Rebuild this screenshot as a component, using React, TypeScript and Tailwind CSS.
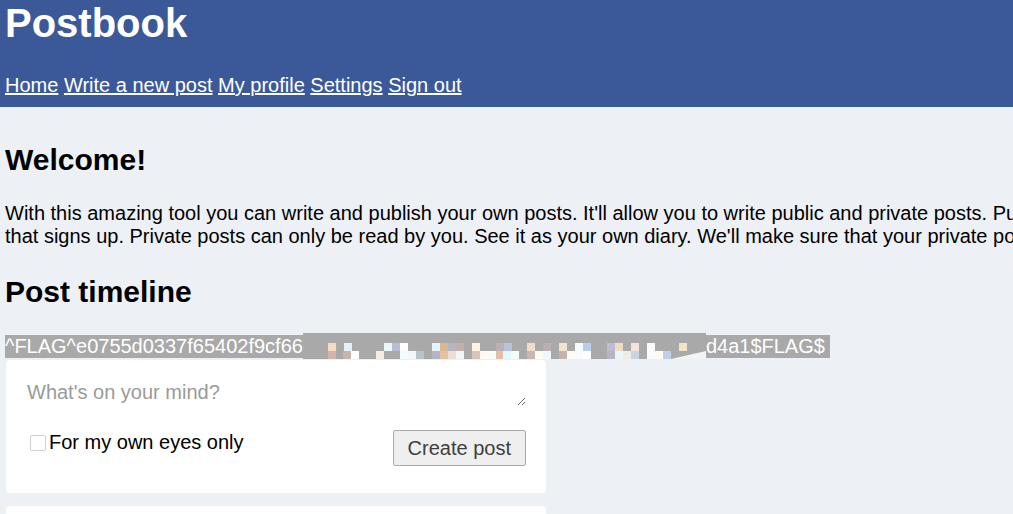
import React from "react";

type Cell = { x: number; row: number; c: string };

// redaction mosaic over the middle of the flag (x is absolute page x)
const cells: Cell[] = [
  { x: 328, row: 0, c: "#f3dcc0" },
  { x: 344, row: 0, c: "#dff3f8" },
  { x: 384, row: 0, c: "#e8f8f4" },
  { x: 392, row: 0, c: "#b9bdd3" },
  { x: 400, row: 0, c: "#ffffff" },
  { x: 432, row: 0, c: "#e3f5fa" },
  { x: 440, row: 0, c: "#dcb796" },
  { x: 448, row: 0, c: "#b2b6c6" },
  { x: 456, row: 0, c: "#c6ada8" },
  { x: 472, row: 0, c: "#fdf3df" },
  { x: 496, row: 0, c: "#bdb0b4" },
  { x: 504, row: 0, c: "#b7c3dd" },
  { x: 527, row: 0, c: "#f0dcc4" },
  { x: 543, row: 0, c: "#b8b0b4" },
  { x: 559, row: 0, c: "#f2e4cc" },
  { x: 575, row: 0, c: "#f4fcfc" },
  { x: 583, row: 0, c: "#b8ccec" },
  { x: 607, row: 0, c: "#b8bcd4" },
  { x: 615, row: 0, c: "#f0dcc0" },
  { x: 631, row: 0, c: "#f4e4e0" },
  { x: 647, row: 0, c: "#fcfcfc" },
  { x: 679, row: 0, c: "#f4e4c4" },
  { x: 328, row: 1, c: "#d4b4ac" },
  { x: 343, row: 1, c: "#c9b5a5" },
  { x: 351, row: 1, c: "#ffffff" },
  { x: 376, row: 1, c: "#f5ede0" },
  { x: 400, row: 1, c: "#eefcfe" },
  { x: 408, row: 1, c: "#f0f8fc" },
  { x: 416, row: 1, c: "#b8c4cc" },
  { x: 432, row: 1, c: "#b4b4c4" },
  { x: 440, row: 1, c: "#e2c2a2" },
  { x: 448, row: 1, c: "#ecdfcf" },
  { x: 456, row: 1, c: "#eef6f8" },
  { x: 472, row: 1, c: "#d8c4b8" },
  { x: 480, row: 1, c: "#fff8f4" },
  { x: 488, row: 1, c: "#fafafa" },
  { x: 496, row: 1, c: "#e2c0a6" },
  { x: 503, row: 1, c: "#e4f8fc" },
  { x: 511, row: 1, c: "#f4fcfc" },
  { x: 527, row: 1, c: "#c4b8b4" },
  { x: 535, row: 1, c: "#fefaf4" },
  { x: 543, row: 1, c: "#f0f8fc" },
  { x: 559, row: 1, c: "#c4b4ac" },
  { x: 567, row: 1, c: "#fcfcf4" },
  { x: 575, row: 1, c: "#f8fcfc" },
  { x: 583, row: 1, c: "#ffffff" },
  { x: 607, row: 1, c: "#b4b4c4" },
  { x: 615, row: 1, c: "#ecf4fc" },
  { x: 623, row: 1, c: "#f0ece0" },
  { x: 631, row: 1, c: "#c8d4e0" },
  { x: 647, row: 1, c: "#fcfcfc" },
  { x: 655, row: 1, c: "#fcfcf4" },
  { x: 663, row: 1, c: "#bcd0ec" },
];

function Redaction() {
  const left = 303;
  return (
    <svg width="403" height="26" viewBox="0 0 403 26" className="-mt-[2px] block shrink-0">
      <rect x="0" y="0" width="403" height="26" fill="#a9a9a9" />
      {cells.map((cell, i) => (
        <rect key={i} x={cell.x - left} y={10 + cell.row * 8} width="8" height="8" fill={cell.c} />
      ))}
      <polygon points="368,26 403,18 403,26" fill="#f4f4f4" />
    </svg>
  );
}

function Composer() {
  return (
    <div className="ml-[1px] w-[540px] rounded-[4px] bg-white px-[20px] pt-[19px] pb-[27px]">
      <textarea
        rows={1}
        placeholder="What's on your mind?"
        className="block h-[27px] w-[500px] border-0 bg-transparent px-[1px] py-[2px] text-[20px] leading-[23px] outline-none placeholder:text-[#9a9a9a]"
      />
      <div className="mt-[25px] flex items-start justify-between">
        <label className="flex items-center text-[20px] leading-[23px] text-black">
          <input
            type="checkbox"
            className="mr-[3px] ml-[4px] h-[16px] w-[16px] appearance-none rounded-[2px] border border-[#d0d0d0] bg-white"
          />
          For my own eyes only
        </label>
        <button className="-mt-[1px] h-[36px] rounded-[2px] border border-[#a9a9a9] bg-[#efefef] px-[14px] text-[20px] leading-[23px] text-[#3e3e3e]">
          Create post
        </button>
      </div>
    </div>
  );
}

export default function App() {
  return (
    <div className="min-h-screen bg-[#edf0f5] font-['Liberation_Sans',Arial,sans-serif] text-black">
      <header className="bg-[#3b5998] px-[5px] pb-[10px] text-white">
        <h1 className="text-[40px] leading-[46px] font-bold">Postbook</h1>
        <nav className="mt-[28px] text-[20px] leading-[23px]">
          <a href="#" className="underline">Home</a>{" "}
          <a href="#" className="underline">Write a new post</a>{" "}
          <a href="#" className="underline">My profile</a>{" "}
          <a href="#" className="underline">Settings</a>{" "}
          <a href="#" className="underline">Sign out</a>
        </nav>
      </header>

      <main className="px-[5px]">
        <h2 className="mt-[35px] text-[30px] leading-[35px] font-bold">Welcome!</h2>
        <p className="mt-[25px] text-[20px] leading-[23px] whitespace-nowrap">
          With this amazing tool you can write and publish your own posts. It'll allow you to write public and private posts. Public posts can be read by anyone
          <br />
          that signs up. Private posts can only be read by you. See it as your own diary. We'll make sure that your private posts are safe with us.
        </p>

        <h2 className="mt-[26px] text-[30px] leading-[35px] font-bold">Post timeline</h2>

        <div className="mt-[26px] flex items-start text-[20px] leading-[23px] text-white">
          <span className="bg-[#a9a9a9]">^FLAG^e0755d0337f65402f9cf66</span>
          <Redaction />
          <span className="bg-[#a9a9a9] pr-[5px]">d4a1$FLAG$</span>
        </div>

        <div className="mt-[1px]">
          <Composer />
          <div className="mt-[13px] ml-[1px] h-[100px] w-[540px] rounded-[4px] bg-white" />
        </div>
      </main>
    </div>
  );
}
